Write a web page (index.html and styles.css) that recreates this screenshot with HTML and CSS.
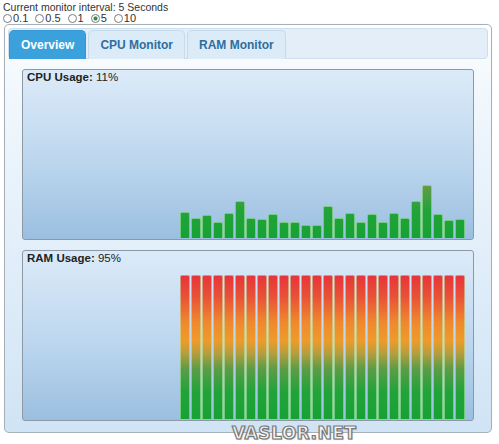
FILE: index.html
```html
<!DOCTYPE html>
<html lang="en">
<head>
    <meta charset="UTF-8">
    <title>Monitor</title>
    <link rel="stylesheet" href="styles.css">
</head>
<body>
    <div class="interval-label">Current monitor interval: 5 Seconds</div>
    <div class="interval-options">
        <label><input type="radio" name="interval" value="0.1">0.1</label>
        <label><input type="radio" name="interval" value="0.5">0.5</label>
        <label><input type="radio" name="interval" value="1">1</label>
        <label><input type="radio" name="interval" value="5" checked>5</label>
        <label><input type="radio" name="interval" value="10">10</label>
    </div>

    <div class="tabs">
        <ul class="tab-nav">
            <li class="tab active">Overview</li>
            <li class="tab">CPU Monitor</li>
            <li class="tab">RAM Monitor</li>
        </ul>

        <div class="tab-panel">
            <!-- CPU -->
            <div class="chart">
                <div class="chart-label"><b>CPU Usage:</b> 11%</div>
                <div class="chart-bars">
                    <div class="bar" style="height:26px"></div>
                    <div class="bar" style="height:20px"></div>
                    <div class="bar" style="height:23px"></div>
                    <div class="bar" style="height:16px"></div>
                    <div class="bar" style="height:25px"></div>
                    <div class="bar" style="height:37px"></div>
                    <div class="bar" style="height:20px"></div>
                    <div class="bar" style="height:19px"></div>
                    <div class="bar" style="height:24px"></div>
                    <div class="bar" style="height:16px"></div>
                    <div class="bar" style="height:16px"></div>
                    <div class="bar" style="height:13px"></div>
                    <div class="bar" style="height:13px"></div>
                    <div class="bar" style="height:32px"></div>
                    <div class="bar" style="height:20px"></div>
                    <div class="bar" style="height:25px"></div>
                    <div class="bar" style="height:16px"></div>
                    <div class="bar" style="height:24px"></div>
                    <div class="bar" style="height:16px"></div>
                    <div class="bar" style="height:25px"></div>
                    <div class="bar" style="height:20px"></div>
                    <div class="bar" style="height:37px"></div>
                    <div class="bar" style="height:53px"></div>
                    <div class="bar" style="height:24px"></div>
                    <div class="bar" style="height:18px"></div>
                    <div class="bar" style="height:19px"></div>
                </div>
            </div>

            <!-- RAM -->
            <div class="chart">
                <div class="chart-label"><b>RAM Usage:</b> 95%</div>
                <div class="chart-bars">
                    <div class="bar full"></div>
                    <div class="bar full"></div>
                    <div class="bar full"></div>
                    <div class="bar full"></div>
                    <div class="bar full"></div>
                    <div class="bar full"></div>
                    <div class="bar full"></div>
                    <div class="bar full"></div>
                    <div class="bar full"></div>
                    <div class="bar full"></div>
                    <div class="bar full"></div>
                    <div class="bar full"></div>
                    <div class="bar full"></div>
                    <div class="bar full"></div>
                    <div class="bar full"></div>
                    <div class="bar full"></div>
                    <div class="bar full"></div>
                    <div class="bar full"></div>
                    <div class="bar full"></div>
                    <div class="bar full"></div>
                    <div class="bar full"></div>
                    <div class="bar full"></div>
                    <div class="bar full"></div>
                    <div class="bar full"></div>
                    <div class="bar full"></div>
                    <div class="bar full"></div>
                </div>
            </div>
        </div>
    </div>

    <div class="watermark">VASLOR.NET</div>
</body>
</html>
```

FILE: styles.css
```css
body, html {
    margin: 0;
    font-family: "Liberation Sans", Arial, sans-serif;
    color: #222;
    background-color: #fff;
}

body {
    padding: 1px 0 0 3px;
}

.interval-label {
    font-size: 10.5px;
    line-height: 12px;
    color: #333;
}

.interval-options {
    display: flex;
    height: 11px;
    font-size: 11px;
    line-height: 11px;
    color: #333;
}

.interval-options label {
    display: flex;
    align-items: center;
    margin-right: 7px;
}

.interval-options input {
    appearance: none;
    -webkit-appearance: none;
    width: 9px;
    height: 9px;
    margin: 0 1px 0 0;
    border: 1px solid #7c7c7c;
    border-radius: 50%;
    background-color: #fff;
}

.interval-options input:checked {
    background: radial-gradient(circle, #3b8a4a 0, #3b8a4a 1.5px, #fff 2.5px);
}

.tabs {
    box-sizing: border-box;
    width: 488px;
    margin: 0 0 0 1px;
    padding: 3px 0 11px;
    border: 1px solid #a7b0b9;
    border-radius: 5px;
    background: linear-gradient(#ffffff, #f2f8fd 15%, #d0e4f5);
    box-shadow: 0 0 1px rgba(0, 0, 0, 0.15);
}

.tab-nav {
    display: flex;
    list-style: none;
    margin: 0 3px;
    padding: 1px 0 0;
    height: 28px;
    background-color: #e3eef9;
    border: 1px solid #cddfee;
    border-radius: 4px;
}

.tab {
    box-sizing: border-box;
    height: 29px;
    margin-right: 2px;
    padding: 0 11px;
    font-size: 12px;
    font-weight: bold;
    line-height: 28px;
    color: #2e6e9e;
    background-color: #dcebf8;
    border: 1px solid #c5dbec;
    border-bottom: none;
    border-radius: 5px 5px 0 0;
}

.tab.active {
    color: #fff;
    background-color: #3aa1dc;
    border-color: #3596d2;
}

.tab-panel {
    display: flex;
    flex-direction: column;
    gap: 10px;
    padding: 10px 17px 0;
}

.chart {
    box-sizing: border-box;
    height: 171px;
    display: flex;
    flex-direction: column;
    border: 1px solid #8c98a4;
    border-radius: 3px;
    background: linear-gradient(#dcebf9, #bcd6ee 55%, #9bbfe0);
}

.chart-label {
    padding: 1px 4px 0;
    font-size: 11.5px;
    line-height: 13px;
    color: #222;
}

.chart-bars {
    flex: 1;
    display: flex;
    align-items: flex-end;
    justify-content: flex-end;
    gap: 1px;
    padding: 0 8px 1px 0;
}

.bar {
    box-sizing: border-box;
    width: 10px;
    border: 1px solid rgba(190, 235, 195, 0.55);
    border-bottom: none;
    border-radius: 2px 2px 0 0;
    background: linear-gradient(to top,
        #16a233 0,
        #23a33a 28px,
        #5c9c46 50px,
        #b79e3c 66px,
        #ee9b2a 78px,
        #ef8a2d 96px,
        #e95236 122px,
        #e7323a 144px);
    background-size: 100% 144px;
    background-position: bottom;
}

.bar.full {
    height: 144px;
}

.watermark {
    position: absolute;
    left: 232px;
    top: 423px;
    font-family: "DejaVu Sans", sans-serif;
    font-size: 17px;
    font-weight: bold;
    letter-spacing: 0.5px;
    color: #f4f4f4;
    -webkit-text-stroke: 1.2px #7a7a7a;
    text-shadow: 1px 1px 1px rgba(0, 0, 0, 0.25);
}
```
